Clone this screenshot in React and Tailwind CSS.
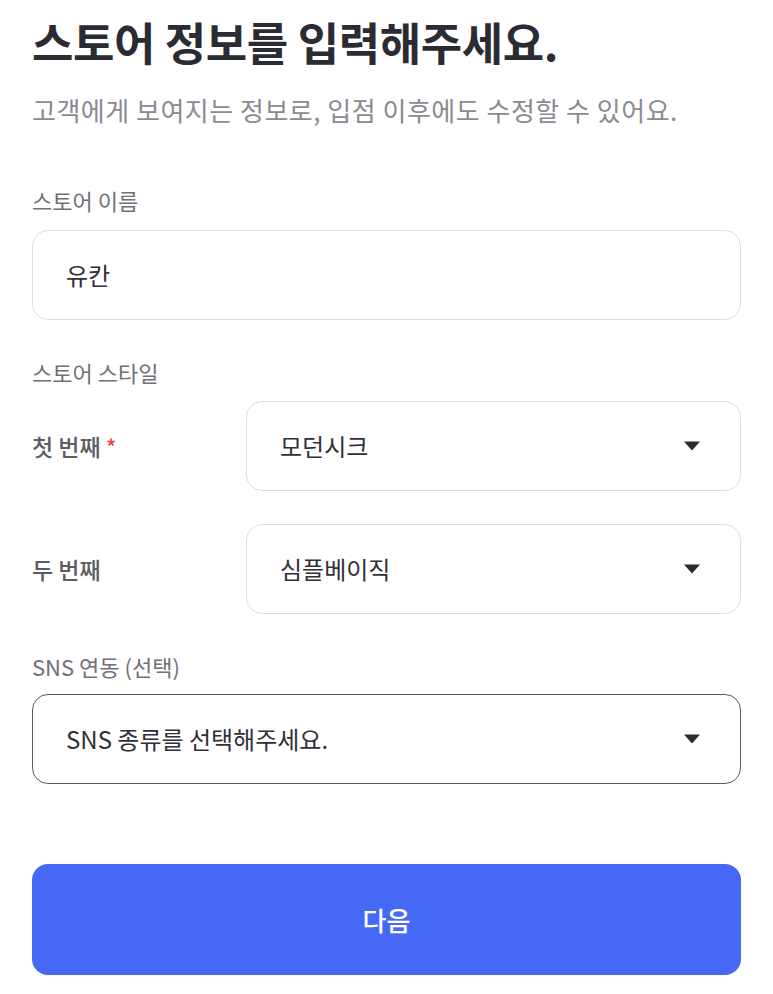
import React from "react";

const Arrow = () => (
  <svg width="18" height="10" viewBox="0 0 18 10" className="shrink-0">
    <path d="M1 0.5 L17 0.5 L9 9.5 Z" fill="#2b2b33" />
  </svg>
);

export default function App() {
  return (
    <div
      className="w-[773px] h-[994px] bg-white px-[32px] overflow-hidden"
      style={{ fontFamily: '"Noto Sans CJK KR", "Noto Sans", sans-serif' }}
    >
      <h1 className="pt-[12px] text-[45px] leading-[60px] font-bold text-[#2b2b33] tracking-[-0.4px]">
        스토어 정보를 입력해주세요.
      </h1>
      <p className="mt-[20px] text-[26px] leading-[36px] text-[#8a8a92] tracking-[0.5px]">
        고객에게 보여지는 정보로, 입점 이후에도 수정할 수 있어요.
      </p>

      <div className="mt-[57px] text-[22px] leading-[30px] text-[#707076]">스토어 이름</div>
      <div className="mt-[15px] h-[90px] rounded-[16px] border border-[#dedede] flex items-center px-[33px] text-[24px] text-[#303036]">
        유칸
      </div>

      <div className="mt-[37px] text-[22px] leading-[30px] text-[#707076]">스토어 스타일</div>
      <div className="mt-[14px] flex items-center">
        <div className="w-[214px] text-[23px] font-medium text-[#5c5c62] flex items-center">
          첫 번째<span className="ml-[5px] text-[#e5484d] text-[22px]">*</span>
        </div>
        <div className="flex-1 h-[90px] rounded-[16px] border border-[#dedede] flex items-center justify-between pl-[33px] pr-[39px] text-[24px] text-[#303036]">
          <span>모던시크</span>
          <Arrow />
        </div>
      </div>
      <div className="mt-[33px] flex items-center">
        <div className="w-[214px] text-[23px] font-medium text-[#5c5c62]">두 번째</div>
        <div className="flex-1 h-[90px] rounded-[16px] border border-[#dedede] flex items-center justify-between pl-[33px] pr-[39px] text-[24px] text-[#303036]">
          <span>심플베이직</span>
          <Arrow />
        </div>
      </div>

      <div className="mt-[37px] text-[22px] leading-[30px] text-[#707076]">SNS 연동 (선택)</div>
      <div className="mt-[13px] h-[90px] rounded-[16px] border-[1.5px] border-[#5a5a60] flex items-center justify-between pl-[33px] pr-[39px] text-[24px] text-[#303036]">
        <span>SNS 종류를 선택해주세요.</span>
        <Arrow />
      </div>

      <button className="mt-[80px] w-full h-[111px] rounded-[16px] bg-[#4669f5] text-white text-[26px] font-medium flex items-center justify-center">
        다음
      </button>
    </div>
  );
}
